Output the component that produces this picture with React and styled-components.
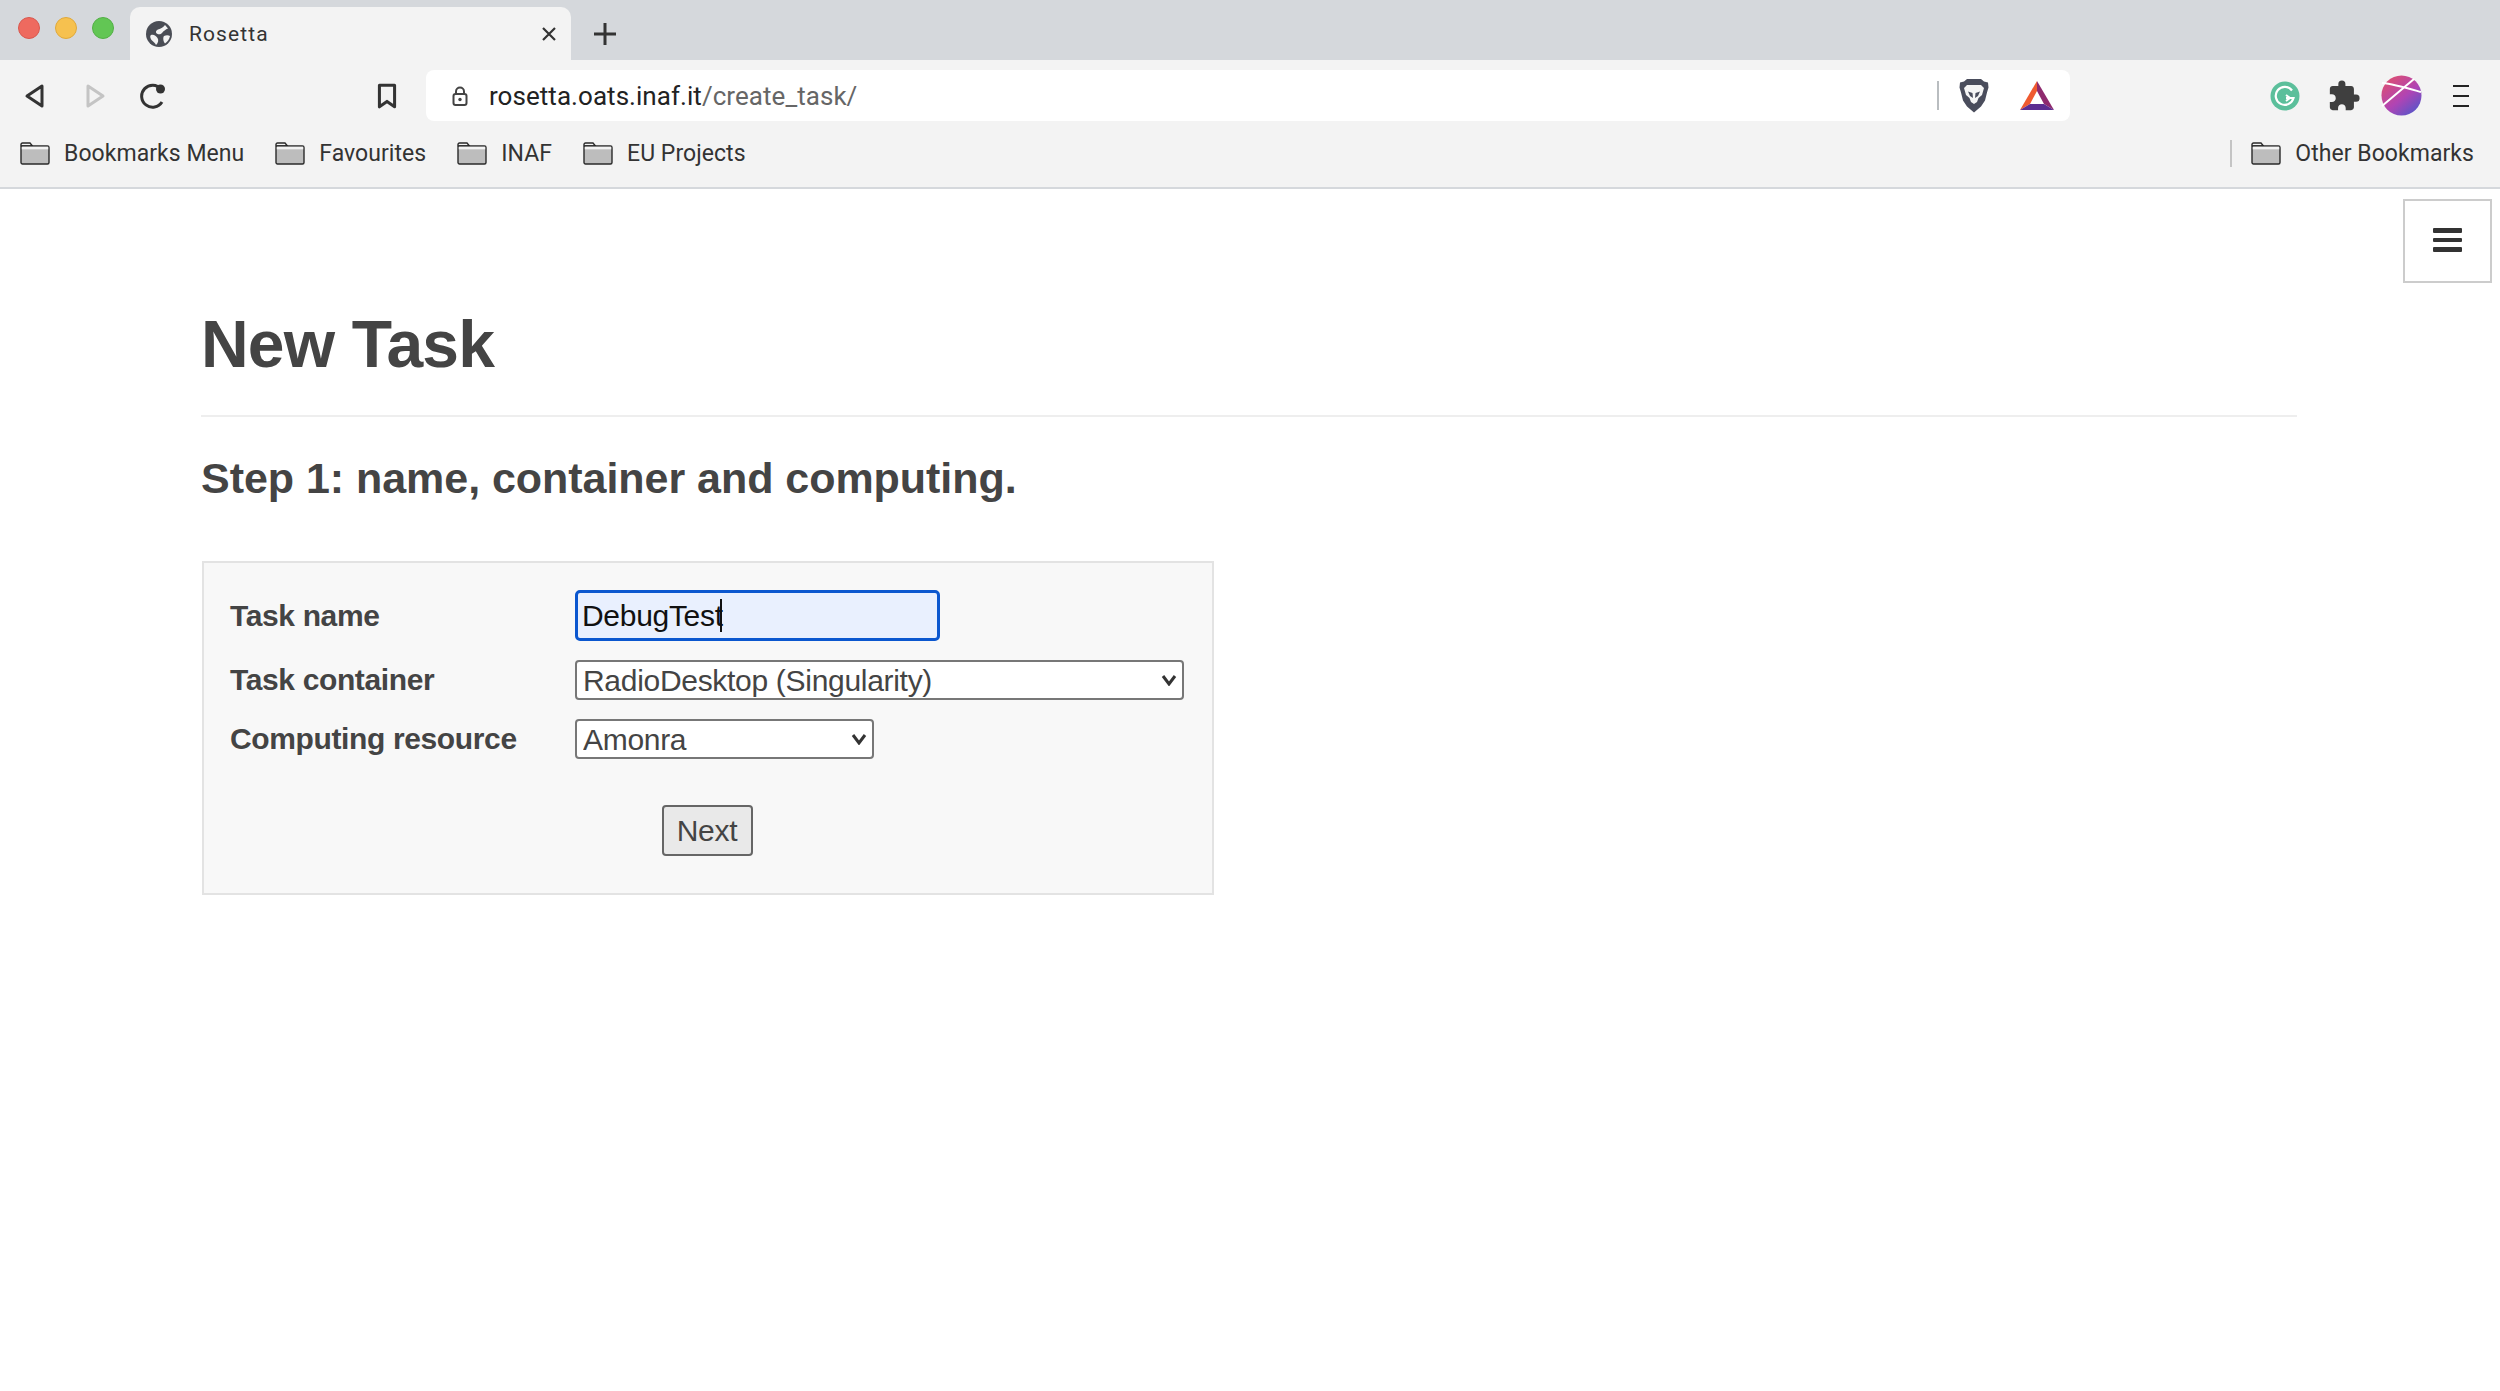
import React from 'react';
import styled, { createGlobalStyle } from 'styled-components';
import { MdExtension } from 'react-icons/md';

const GlobalStyle = createGlobalStyle`
	html, body {
		margin: 0;
		background: #fff;
		font-family: 'Liberation Sans', Arial, sans-serif;
	}
`;

function Folder() {
	return (
		<FolderIcon viewBox='0 0 30 23'>
			<path d='M1 4V2.500C1 1.600 1.600 1 2.500 1H10l2.500 3H1z' fill='#f3f3f3' stroke='#2a2a2a' strokeWidth='1.4' />
			<rect x='1' y='4' width='28' height='18' rx='1.5' fill='#bdbdbd' stroke='#2a2a2a' strokeWidth='1.4' />
			<rect x='1.8' y='4.7' width='26.4' height='2.6' fill='#f3f3f3' />
		</FolderIcon>
	);
}

function Chevron() {
	return (
		<ChevronIcon viewBox='0 0 18 12'>
			<path d='M3 2l6 8 6-8' fill='none' stroke='#333' strokeWidth='3' />
		</ChevronIcon>
	);
}

export default function App() {
	return (
		<>
			<GlobalStyle />
			<TabStrip>
				<Lights>
					<Light $color='#ee6a5f' $edge='#d9584e' />
					<Light $color='#f6c14f' $edge='#e0a93a' />
					<Light $color='#62c654' $edge='#52b045' />
				</Lights>
				<Tab>
					<svg width='26' height='26' viewBox='0 0 26 26'>
						<circle cx='13' cy='13' r='13' fill='#4a4d55' />
						<path d='M12 8.500c3-1 5.500-2 7-4.500l3 3.500c-2.500 1-4.500 2.500-6 4.500-2 2.500-5.500 1-6-.5-.3-1.200.7-2.500 2-3z' fill='#f3f3f3' />
						<path d='M5 14c2.500-1 5 .5 6.500 3s.5 5-1.500 7c-1-2.500-2.500-3-4-4.500S3.500 15 5 14z' fill='#f3f3f3' />
						<path d='M18 15c2-1 4.500-1 6 0-.5 3-2.500 6-5 7.500-1.500-1.500-2.500-5.500-1-7.500z' fill='#f3f3f3' />
					</svg>
					<TabTitle>Rosetta</TabTitle>
					<TabClose viewBox='0 0 16 16'>
						<path d='M2 2l12 12M14 2 2 14' stroke='#333' strokeWidth='2.2' />
					</TabClose>
				</Tab>
				<NewTab viewBox='0 0 24 24'>
					<path d='M12 1v22M1 12h22' stroke='#333' strokeWidth='3' />
				</NewTab>
			</TabStrip>

			<Toolbar>
				<NavIcon $ml={24} $w={22} viewBox='0 0 22 24'>
					<path d='M18 2v20L3 12z' fill='none' stroke='#333' strokeWidth='3' strokeLinejoin='round' />
				</NavIcon>
				<NavIcon $ml={38} $w={22} viewBox='0 0 22 24'>
					<path d='M4 2v20l15-10z' fill='none' stroke='#c4c4c4' strokeWidth='3' strokeLinejoin='round' />
				</NavIcon>
				<NavIcon $ml={33} $w={28} viewBox='0 0 28 26'>
					<path d='M23 19a11 11 0 1 1-1-13' fill='none' stroke='#333' strokeWidth='3' />
					<circle cx='21.500' cy='6' r='4.500' fill='#333' />
				</NavIcon>
				<NavIcon $ml={208} $w={24} viewBox='0 0 20 24'>
					<path d='M3 2h14v20l-7-5-7 5z' fill='none' stroke='#333' strokeWidth='2.800' strokeLinejoin='round' />
				</NavIcon>
				<UrlBar>
					<svg width='16' height='20' viewBox='0 0 16 20'>
						<path d='M4 9V5.500a4 4 0 0 1 8 0V9' fill='none' stroke='#444' strokeWidth='2' />
						<rect x='1.500' y='8' width='13' height='11' rx='2' fill='none' stroke='#444' strokeWidth='2' />
						<circle cx='8' cy='13.500' r='1.700' fill='#444' />
					</svg>
					<UrlText>
						rosetta.oats.inaf.it<UrlPath>/create_task/</UrlPath>
					</UrlText>
					<UrlDivider />
					<svg width='30' height='34' viewBox='0 0 30 34'>
						<path d='M8 0h14l3 2.500 4 1 .500 5-1.500 5-2 8-4 6-7 6-7-6-4-6-2-8L.500 8.500l.500-5 4-1z' fill='#4a4d5c' />
						<path d='M8 6h14l3 3-2 7-3.500 3-1.500 4-3 2-3-2-1.500-4L7 16 5 9z' fill='#f5f5f5' />
						<path d='M9 12.500l4.500 1.500.500 5-3-2zM21 12.500 16.500 14l-.500 5 3-2z' fill='#4a4d5c' />
						<path d='M12 24l3 1.500 3-1.500-3 4z' fill='#4a4d5c' />
					</svg>
					<svg width='34' height='30' viewBox='0 0 34 30' style={{ marginLeft: 31 }}>
						<path d='M17 0 0 29l10-6 7-13z' fill='#ef5a30' />
						<path d='M17 0v10l7 13 10 6z' fill='#8e2a6e' />
						<path d='M0 29h34l-10-6H10z' fill='#5c2d91' />
					</svg>
				</UrlBar>
				<ExtensionTray>
					<svg width='30' height='30' viewBox='0 0 30 30'>
						<circle cx='15' cy='15' r='14.500' fill='#5bbf9b' />
						<path d='M22 9.500a9 9 0 1 0 1.500 7.500H16' fill='none' stroke='#fff' strokeWidth='2.200' />
						<path d='M16 14l4 3-4 3' fill='none' stroke='#fff' strokeWidth='2' />
					</svg>
					<MdExtension size={34} color='#3f3f3f' style={{ marginLeft: 27 }} />
					<svg width='41' height='41' viewBox='0 0 41 41' style={{ marginLeft: 20 }}>
						<defs>
							<linearGradient id='avatar-fill' x1='0.1' y1='0' x2='0.9' y2='1'>
								<stop offset='0' stopColor='#e2506a' />
								<stop offset='0.55' stopColor='#b044b4' />
								<stop offset='1' stopColor='#4a58cc' />
							</linearGradient>
						</defs>
						<circle cx='20.500' cy='20.500' r='20' fill='url(#avatar-fill)' />
						<path d='M1 8c12 1 25 5 39 9M1 31 33 4' fill='none' stroke='#fff' strokeWidth='2' />
					</svg>
					<svg width='18' height='24' viewBox='0 0 18 24' style={{ marginLeft: 30 }}>
						<path d='M1 2h16M1 12h16M1 22h16' stroke='#222' strokeWidth='2.200' />
					</svg>
				</ExtensionTray>
			</Toolbar>

			<BookmarksBar>
				<Bookmark><Folder />Bookmarks Menu</Bookmark>
				<Bookmark><Folder />Favourites</Bookmark>
				<Bookmark><Folder />INAF</Bookmark>
				<Bookmark><Folder />EU Projects</Bookmark>
				<OtherBookmarks>
					<Bookmark><Folder />Other Bookmarks</Bookmark>
				</OtherBookmarks>
			</BookmarksBar>

			<Page>
				<MenuToggle aria-label='menu'>
					<MenuBar />
					<MenuBar />
					<MenuBar />
				</MenuToggle>
				<Header>
					<Title>New Task</Title>
				</Header>
				<StepTitle>Step 1: name, container and computing.</StepTitle>
				<Panel>
					<FormGrid>
						<FieldLabel>Task name</FieldLabel>
						<NameField>
							<NameInput defaultValue='DebugTest' />
							<Caret />
						</NameField>
						<FieldLabel>Task container</FieldLabel>
						<SelectWrap $width={609}>
							<Select defaultValue='radio'>
								<option value='radio'>RadioDesktop (Singularity)</option>
							</Select>
							<Chevron />
						</SelectWrap>
						<FieldLabel>Computing resource</FieldLabel>
						<SelectWrap $width={299}>
							<Select defaultValue='amonra'>
								<option value='amonra'>Amonra</option>
							</Select>
							<Chevron />
						</SelectWrap>
					</FormGrid>
					<NextButton>Next</NextButton>
				</Panel>
			</Page>
		</>
	);
}

const TabStrip = styled.div`
	display: flex;
	align-items: flex-end;
	height: 60px;
	background-color: #d5d8dc;
`;

const Lights = styled.div`
	display: flex;
	gap: 15px;
	align-self: flex-start;
	width: 112px;
	padding: 17px 0 0 18px;
`;

const Light = styled.span`
	width: 22px;
	height: 22px;
	box-sizing: border-box;
	border-radius: 50%;
	background-color: ${props => props.$color};
	border: 1px solid ${props => props.$edge};
`;

const Tab = styled.div`
	display: flex;
	align-items: center;
	box-sizing: border-box;
	width: 441px;
	height: 53px;
	padding: 0 14px 0 16px;
	background-color: #f3f3f3;
	border-radius: 10px 10px 0 0;
`;

const TabTitle = styled.span`
	flex: 1;
	margin-left: 17px;
	font: 400 21px Roboto, sans-serif;
	letter-spacing: 1.1px;
	color: #333;
`;

const TabClose = styled.svg`
	width: 16px;
	height: 16px;
`;

const NewTab = styled.svg`
	width: 24px;
	height: 24px;
	margin: 0 0 14px 22px;
`;

const Toolbar = styled.div`
	display: flex;
	align-items: center;
	box-sizing: border-box;
	height: 68px;
	padding-top: 3px;
	background-color: #f3f3f3;
`;

const NavIcon = styled.svg`
	flex: none;
	width: ${props => props.$w}px;
	height: 26px;
	margin-left: ${props => props.$ml}px;
`;

const UrlBar = styled.div`
	display: flex;
	align-items: center;
	box-sizing: border-box;
	width: 1644px;
	height: 51px;
	margin-left: 27px;
	padding: 0 16px 0 26px;
	background-color: #fff;
	border-radius: 8px;
`;

const UrlText = styled.span`
	flex: 1;
	margin-left: 21px;
	font: 400 26px Roboto, sans-serif;
	letter-spacing: 0.05px;
	color: #222;
`;

const UrlPath = styled.span`
	color: #666;
`;

const UrlDivider = styled.span`
	width: 2px;
	height: 29px;
	margin-right: 20px;
	background-color: #b9bdc0;
`;

const ExtensionTray = styled.div`
	display: flex;
	align-items: center;
	margin-left: 200px;
`;

const BookmarksBar = styled.div`
	display: flex;
	align-items: center;
	box-sizing: border-box;
	height: 61px;
	padding: 0 26px 8px 20px;
	gap: 31px;
	background-color: #f3f3f3;
	border-bottom: 2px solid #d5d8dc;
`;

const Bookmark = styled.span`
	display: flex;
	align-items: center;
	gap: 14px;
	font: 400 23px Roboto, sans-serif;
	letter-spacing: 0.05px;
	color: #333;
`;

const FolderIcon = styled.svg`
	width: 30px;
	height: 23px;
`;

const OtherBookmarks = styled.div`
	display: flex;
	margin-left: auto;
	padding-left: 19px;
	border-left: 2px solid #c4c4c4;
`;

const Page = styled.main`
	position: relative;
	min-height: 1202px;
	box-sizing: border-box;
	padding: 115px 203px 0 201px;
	background-color: #fff;
	color: #444;
`;

const MenuToggle = styled.button`
	position: absolute;
	top: 10px;
	right: 8px;
	display: flex;
	flex-direction: column;
	align-items: center;
	justify-content: center;
	gap: 5px;
	width: 89px;
	height: 84px;
	padding: 0 0 2px;
	background-color: #fff;
	border: 2px solid #ccc;
`;

const MenuBar = styled.span`
	width: 29px;
	height: 4.500px;
	background-color: #333;
	border-radius: 1px;
`;

const Header = styled.header`
	padding-bottom: 31px;
	border-bottom: 2px solid #eee;
`;

const Title = styled.h1`
	margin: 0;
	font-size: 66px;
	font-weight: 700;
	line-height: 80px;
	letter-spacing: -0.8px;
`;

const StepTitle = styled.h2`
	margin: 36px 0 58px;
	font-size: 43px;
	font-weight: 700;
	line-height: 50px;
	letter-spacing: -0.04px;
`;

const Panel = styled.section`
	display: flex;
	flex-direction: column;
	align-items: center;
	box-sizing: border-box;
	width: 1012px;
	margin-left: 1px;
	padding: 27px 26px 37px;
	background-color: #f8f8f8;
	border: 2px solid #e3e3e3;
`;

const FormGrid = styled.div`
	display: grid;
	grid-template-columns: 345px 1fr;
	grid-template-rows: 51px 40px 40px;
	row-gap: 19px;
	align-items: center;
	width: 100%;
`;

const FieldLabel = styled.label`
	font-size: 30px;
	font-weight: 700;
	letter-spacing: -0.37px;
`;

const NameField = styled.div`
	position: relative;
	width: 365px;
	height: 51px;
`;

const NameInput = styled.input`
	box-sizing: border-box;
	width: 100%;
	height: 100%;
	padding: 0 4px;
	font: 400 30px 'Liberation Sans', Arial, sans-serif;
	letter-spacing: -0.3px;
	color: #111;
	background-color: #e9f0fe;
	border: 3px solid #0b57cf;
	border-radius: 5px;
	outline: none;
`;

const Caret = styled.span`
	position: absolute;
	top: 9px;
	left: 145px;
	width: 1.500px;
	height: 33px;
	background-color: #111;
`;

const SelectWrap = styled.div`
	position: relative;
	width: ${props => props.$width}px;
	height: 40px;
`;

const Select = styled.select`
	appearance: none;
	box-sizing: border-box;
	width: 100%;
	height: 100%;
	padding: 0 30px 0 6px;
	font: 400 30px 'Liberation Sans', Arial, sans-serif;
	letter-spacing: -0.3px;
	color: #444;
	background-color: #fff;
	border: 2px solid #777;
	border-radius: 4px;
`;

const ChevronIcon = styled.svg`
	position: absolute;
	top: 14px;
	right: 6px;
	width: 18px;
	height: 12px;
	pointer-events: none;
`;

const NextButton = styled.button`
	box-sizing: border-box;
	width: 91px;
	height: 51px;
	margin: 46px 2px 0 0;
	padding: 0;
	font: 400 30px 'Liberation Sans', Arial, sans-serif;
	letter-spacing: -0.3px;
	color: #444;
	background-color: #e9e9e9;
	border: 2px solid #666;
	border-radius: 4px;
`;
